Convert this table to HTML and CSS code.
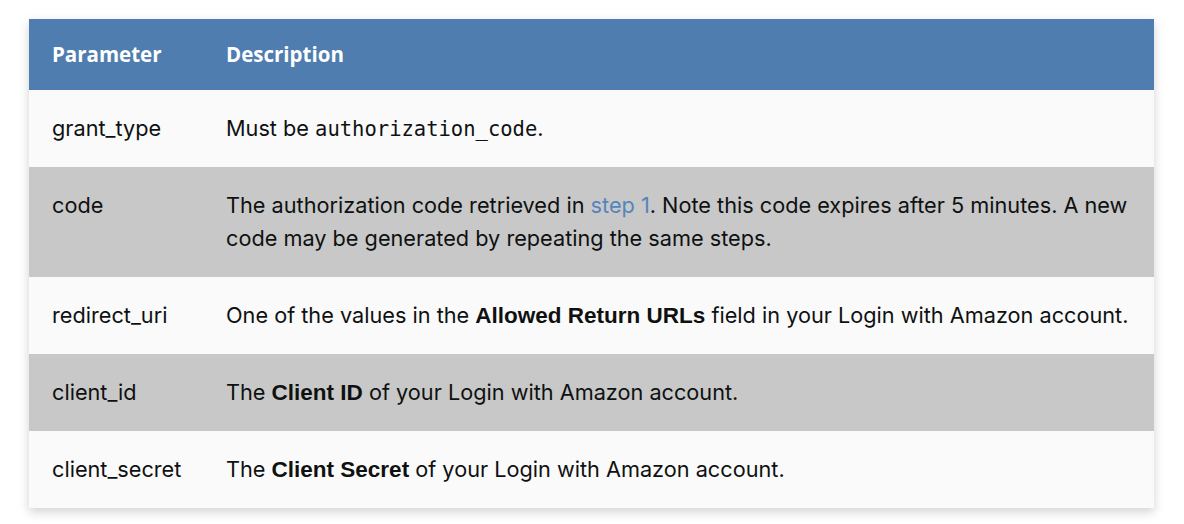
FILE: index.html
```html
<!DOCTYPE html>
<html>
<head>
<meta charset="utf-8">
<link rel="stylesheet" href="styles.css">
</head>
<body>
<div class="wrap">
<table class="params">
<thead>
<tr><th class="c1">Parameter</th><th>Description</th></tr>
</thead>
<tbody>
<tr class="odd"><td class="c1">grant_type</td><td>Must be <code>authorization_code</code>.</td></tr>
<tr class="even"><td class="c1">code</td><td>The authorization code retrieved in <a href="#">step 1</a>. Note this code expires after 5 minutes. A new code may be generated by repeating the same steps.</td></tr>
<tr class="odd"><td class="c1">redirect_uri</td><td>One of the values in the <b>Allowed Return URLs</b> field in your Login with Amazon account.</td></tr>
<tr class="even"><td class="c1">client_id</td><td>The <b>Client ID</b> of your Login with Amazon account.</td></tr>
<tr class="odd"><td class="c1">client_secret</td><td>The <b>Client Secret</b> of your Login with Amazon account.</td></tr>
</tbody>
</table>
</div>
</body>
</html>
```
FILE: styles.css
```css
html, body {
  margin: 0;
  padding: 0;
  background: #ffffff;
}
.wrap {
  padding: 19px 30px 20px 29px;
}
.params {
  width: 1125px;
  table-layout: fixed;
  border-collapse: collapse;
  font-family: "Inter", "Open Sans", sans-serif;
  font-size: 21.7px;
  line-height: 33px;
  color: #0f1111;
  box-shadow: 0 4px 10px rgba(0,0,0,0.18);
}
.params th {
  background: #4f7db0;
  color: #ffffff;
  font-family: "Open Sans", sans-serif;
  font-size: 20.5px;
  font-weight: 700;
  text-align: left;
  padding: 19px 23px;
  vertical-align: top;
}
.params td {
  padding: 22px 23px;
  vertical-align: top;
}
.params .c1 {
  width: 128px;
}
.odd td { background: #fafafa; }
.even td { background: #c8c8c8; }
.params b {
  font-family: "Liberation Sans", Arial, sans-serif;
  font-weight: 700;
  font-size: 22.5px;
}
.params code {
  font-family: "DejaVu Sans Mono", monospace;
  font-size: 20.5px;
  line-height: 1;
}
.params a {
  color: #5585bd;
  text-decoration: none;
}
```
